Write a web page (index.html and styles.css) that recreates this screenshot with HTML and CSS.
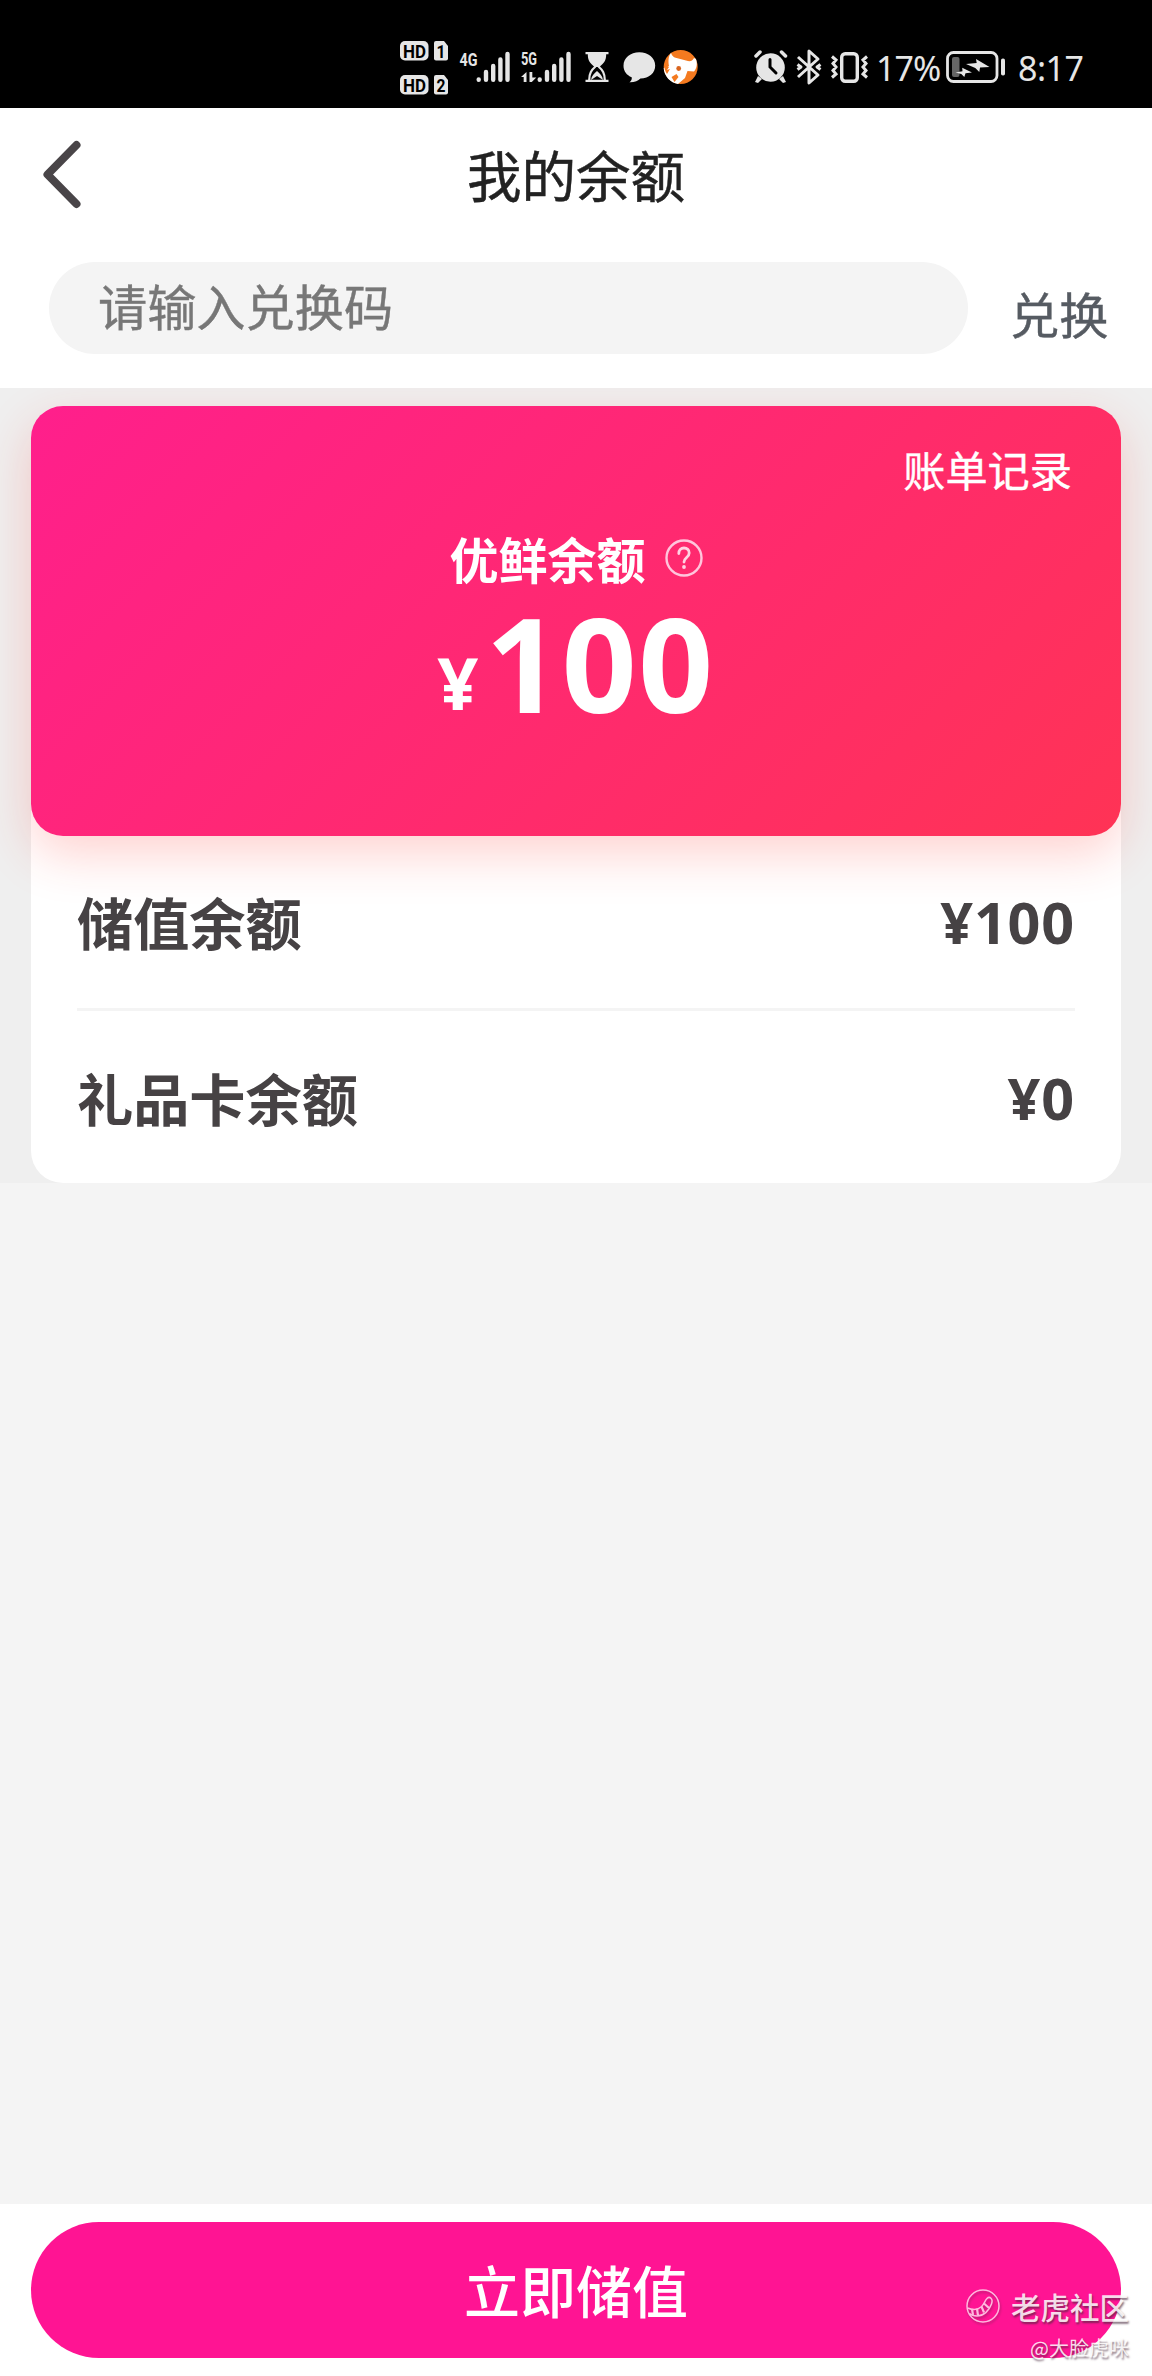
FILE: index.html
```html
<!DOCTYPE html>
<html lang="zh-CN">
<head>
<meta charset="utf-8">
<title>我的余额</title>
<link rel="stylesheet" href="styles.css">
</head>
<body>
<div class="status">
  <svg class="status-left" width="320" height="75" viewBox="0 0 320 75">
    <g fill="#e6e6e6">
      <rect x="10" y="11" width="28.5" height="19.5" rx="5"/>
      <path d="M46 11h8l4 5v12.500q0 2-2 2H46q-2 0-2-2V13q0-2 2-2z"/>
      <rect x="10" y="45" width="28.500" height="19.500" rx="5"/>
      <path d="M46 45h8l4 5v12.500q0 2-2 2H46q-2 0-2-2V47q0-2 2-2z"/>
    </g>
    <g class="badge-text">
      <text x="13" y="27.500" textLength="23" lengthAdjust="spacingAndGlyphs">HD</text>
      <text x="46.500" y="27.500" textLength="9" lengthAdjust="spacingAndGlyphs">1</text>
      <text x="13" y="61.500" textLength="23" lengthAdjust="spacingAndGlyphs">HD</text>
      <text x="46.500" y="61.500" textLength="9" lengthAdjust="spacingAndGlyphs">2</text>
    </g>
    <g class="net-text">
      <text x="69.500" y="35.500" textLength="18" lengthAdjust="spacingAndGlyphs">4G</text>
      <text x="131" y="35" textLength="16" lengthAdjust="spacingAndGlyphs">5G</text>
    </g>
    <g stroke="#e6e6e6" stroke-width="4.400" stroke-linecap="round">
      <path d="M88.700 49.500v.2M96 42v7.700M103.200 36v13.700M110.400 29.500v20.200M117.500 24v25.700"/>
      <path d="M149.700 49.500v.2M157 42v7.700M164.200 36v13.700M171.400 29.500v20.200M178.500 24v25.700"/>
    </g>
    <path fill="#e6e6e6" d="M136.500 42v10h-2.800v-5H131zM139.500 42h2.800v5.500h4l-4.500 4.500h-2.300z"/>
    <path fill="#e6e6e6" d="M195.500 22h23v2.300h-2.300c0 6.500-2.500 9-6.700 12.700h-5c-4.200-3.700-6.700-6.200-6.700-12.700h-2.300zM195.500 49.700h23V52h-23z"/>
    <path d="M205.500 36.500c-4 3.500-6.300 6.500-6.300 13.500M208.500 36.500c4 3.500 6.300 6.500 6.300 13.500" fill="none" stroke="#e6e6e6" stroke-width="2.200"/>
    <path fill="#e6e6e6" d="M201 50c.5-4 3-6.500 6-9 3 2.500 5.500 5 6 9l-6-4z"/>
    <path fill="#e6e6e6" d="M249.300 22.300c9 0 15.900 5.600 15.900 13.200 0 7.700-6 12.700-14.800 13-2.200 2.300-6 4-11 3.800 2-1.600 2.600-3 2.300-5.100-5-2-8.200-6.200-8.200-11.500 0-7.700 7-13.400 15.800-13.400z"/>
    <circle cx="290.700" cy="37" r="17" fill="#f47a20"/>
    <path fill="#fff" d="M281 23c1 3 3 4.500 5.500 5l9.500 2.500c4 1.500 6 1 8-2.500l2 1c1.500 5 1 9-2 12.500l-6.500-.5-2.500 7-7 6c-7.500-1-14-8-14.300-16l5.300-2c-1-5-.5-10 2-13z"/>
    <path fill="#f47a20" d="M274.500 34l4.500 3-2 3 3-1-3 5c-2-3-3-6-2.500-10zM281.500 47l5-3 2 3-4 5z"/>
    <circle cx="288.700" cy="38.500" r="2.400" fill="#d9651f"/>
  </svg>
  <svg class="status-icons" width="118" height="40" viewBox="0 0 118 40">
    <g fill="#e6e6e6">
      <circle cx="17.500" cy="20.500" r="14.300"/>
      <path d="M5 29l4 3-4 4-3-1zM30 29l-4 3 4 4 3-1z"/>
    </g>
    <path d="M3 9l4-4M28.500 5l4 4" fill="none" stroke="#e6e6e6" stroke-width="3.500" stroke-linecap="round"/>
    <path d="M17 12.500V20l6 6" fill="none" stroke="#000" stroke-width="3" stroke-linecap="round"/>
    <path d="M45 10l20 18-9 8V4l9 8-20 18M44.500 17.500l3.500 2.500-3.500 2.500M67.500 17.500L64 20l3.500 2.500" fill="none" stroke="#e6e6e6" stroke-width="3" stroke-linejoin="round"/>
    <rect x="88.700" y="6.700" width="15.600" height="27.600" rx="3.500" fill="none" stroke="#e6e6e6" stroke-width="3.400"/>
    <path d="M79 9.500l4 3.500-3 3.500 3 3.500-3 3.500 3 3.500-4 3.500M114 9.500l-4 3.500 3 3.500-3 3.500 3 3.500-3 3.500 4 3.500" fill="none" stroke="#e6e6e6" stroke-width="3"/>
  </svg>
  <span class="status-text percent">17%</span>
  <svg class="battery" width="60" height="34" viewBox="0 0 60 34">
    <rect x="1.500" y="2.500" width="49.500" height="29" rx="6" fill="none" stroke="#e6e6e6" stroke-width="2.800"/>
    <rect x="6" y="7" width="7.500" height="20" rx="2" fill="#666"/>
    <path fill="#e6e6e6" d="M20 14l10.700-1L30 9l13.500 8-9.500.5L33.300 22l-4-4zM9.500 22.500l7-1.200-.3-3.600 9.800 4.800-6.500.7-1.200 3.800-3-3z"/>
    <rect x="55" y="8.500" width="4" height="17" rx="1.800" fill="#e6e6e6"/>
  </svg>
  <span class="status-text clock">8:17</span>
</div>

<header class="header">
  <svg class="back" width="44" height="74" viewBox="0 0 44 74"><path d="M36.500 8L7.500 37.500l29 29.500" fill="none" stroke="#494548" stroke-width="8" stroke-linecap="round" stroke-linejoin="round"/></svg>
  <h1 class="title">我的余额</h1>
</header>

<div class="redeem">
  <div class="redeem-input">请输入兑换码</div>
  <span class="redeem-btn">兑换</span>
</div>

<section class="balance">
  <div class="panel">
    <div class="card">
      <div class="bill">账单记录</div>
      <div class="card-label">优鲜余额
        <svg class="help" width="38" height="38" viewBox="0 0 38 38"><circle cx="19" cy="19" r="17.500" fill="none" stroke="#ffc5dc" stroke-width="2.400"/><path d="M13.800 14.500c0-3.300 2.100-5.500 5.200-5.500s5.200 2 5.200 5c0 4.400-5.200 4.600-5.200 9" fill="none" stroke="#ffd3e3" stroke-width="2.800" stroke-linecap="round"/><circle cx="19" cy="28" r="1.900" fill="#ffd3e3"/></svg>
      </div>
      <div class="amount"><span class="yen">¥</span><span class="num">100</span></div>
    </div>
    <div class="row"><span class="name">储值余额</span><span class="value">¥100</span></div>
    <div class="row"><span class="name">礼品卡余额</span><span class="value">¥0</span></div>
  </div>
</section>

<footer class="footer">
  <div class="recharge">立即储值</div>
  <div class="watermark">
    <div class="brand">
      <svg width="36" height="36" viewBox="0 0 36 36"><circle cx="18" cy="18" r="16" fill="none" stroke="#fff" stroke-width="1.500"/><path d="M2.500 20c5 2 10 2 13.500-1s3.500-6 6-8.500 6.500 0 4.500 5.500c-2.500 7-8 12-14.500 12-3 0-6-1-7.500-2.500" fill="none" stroke="#fff" stroke-width="1.500"/><path d="M7 21l1 6M12 20.500l1 7M16.500 18.500l2.500 6M19 15.500l5 4.500" stroke="#fff" stroke-width="2.200"/></svg>
      <span>老虎社区</span>
    </div>
    <div class="author">@大脸虎咪</div>
  </div>
</footer>
</body>
</html>
```
FILE: styles.css
```css
* { box-sizing: border-box; }
body {
  margin: 0;
  width: 1152px;
  height: 2376px;
  display: flex;
  flex-direction: column;
  background: #f4f4f4;
  font-family: "Noto Sans", "Noto Sans CJK SC", sans-serif;
  overflow: hidden;
}
svg { display: block; flex: none; }

.status {
  height: 108px;
  flex: none;
  display: flex;
  align-items: flex-start;
  padding: 30px 0 0 390px;
  background: #000;
  color: #e6e6e6;
}
.status-icons { margin: 17px 0 0 43px; }
.badge-text { font: bold 18px "Roboto", sans-serif; fill: #000; }
.net-text { font: bold 18px "Roboto", sans-serif; fill: #e6e6e6; }
.status-text { font-size: 34px; line-height: 40px; white-space: nowrap; margin-top: 18px; }
.percent { width: 70px; margin-left: 5px; letter-spacing: -1px; }
.battery { margin: 20px 0 0 0; }
.clock { margin-left: 12px; letter-spacing: -.5px; }

.header {
  height: 132px;
  flex: none;
  display: grid;
  grid-template-columns: 120px 1fr 120px;
  align-items: center;
  background: #fff;
}
.back { margin-left: 40px; }
.title {
  margin: 0 0 1px;
  text-align: center;
  font: 400 54.500px/80px "Noto Sans CJK SC", sans-serif;
  color: #222;
  -webkit-text-stroke: .5px #222;
}

.redeem {
  height: 148px;
  flex: none;
  display: flex;
  align-items: flex-start;
  padding: 22px 0 0 49px;
  background: #fff;
  font-family: "Noto Sans CJK SC", sans-serif;
  font-size: 49.200px;
}
.redeem-input {
  width: 919px;
  height: 92px;
  padding-left: 49px;
  border-radius: 46px;
  background: #f4f4f4;
  color: #777;
  line-height: 85px;
  -webkit-text-stroke: .4px #777;
}
.redeem-btn { margin: 6px 0 0 42px; line-height: 90px; color: #565b62; -webkit-text-stroke: .4px #565b62; }

.balance {
  height: 795px;
  flex: none;
  padding: 18px 31px 0;
  background: #efefef;
  overflow: hidden;
}
.panel { height: 777px; border-radius: 32px; background: #fff; }
.card {
  height: 430px;
  padding: 33px 49px 0;
  border-radius: 32px;
  background: linear-gradient(135deg, #ff1f8c, #ff3355);
  box-shadow: 0 18px 50px rgba(255, 52, 40, .22);
  color: #fff;
}
.bill { text-align: right; font: 42.200px/60px "Noto Sans CJK SC", sans-serif; -webkit-text-stroke: .4px #fff; }
.card-label {
  display: flex;
  justify-content: center;
  align-items: center;
  gap: 19px;
  height: 70px;
  margin-top: 24px;
  font: bold 49px/70px "Noto Sans CJK SC", sans-serif;
}
.amount {
  display: flex;
  justify-content: center;
  align-items: flex-start;
  margin-top: 1px;
  font-weight: bold;
}
.yen { font-size: 72px; line-height: 177px; margin-right: 7px; }
.num { font-size: 131px; line-height: 136px; letter-spacing: 1.500px; }

.row {
  height: 172px;
  margin: 0 46px;
  display: flex;
  justify-content: space-between;
  align-items: center;
  color: #464244;
}
.row + .row { height: 177px; border-top: 3px solid #f4f4f4; }
.name { padding-bottom: 3px; font: bold 56.200px/80px "Noto Sans CJK SC", sans-serif; }
.value { font: bold 57.500px/80px "Noto Sans", sans-serif; letter-spacing: .8px; }

.footer {
  height: 172px;
  margin-top: auto;
  flex: none;
  position: relative;
  padding: 18px 31px;
  background: #fff;
}
.recharge {
  height: 136px;
  border-radius: 68px;
  background: #ff1493;
  color: #fff;
  text-align: center;
  font: 500 56px/133px "Noto Sans CJK SC", sans-serif;
}
/* community stamp laid over the corner of the button */
.watermark {
  position: absolute;
  right: 23px;
  bottom: 14px;
  color: rgba(255, 255, 255, .85);
  font-family: "Noto Sans CJK SC", sans-serif;
  text-align: right;
  text-shadow: 1px 2px 2px rgba(70, 40, 60, .65);
}
.brand { display: flex; align-items: center; gap: 10px; font-size: 29.500px; font-weight: 500; line-height: 40px; }
.brand svg { opacity: .7; filter: drop-shadow(1px 2px 1px rgba(70, 40, 60, .5)); }
.author { font-size: 20px; line-height: 28px; margin-top: 8px; }
```
